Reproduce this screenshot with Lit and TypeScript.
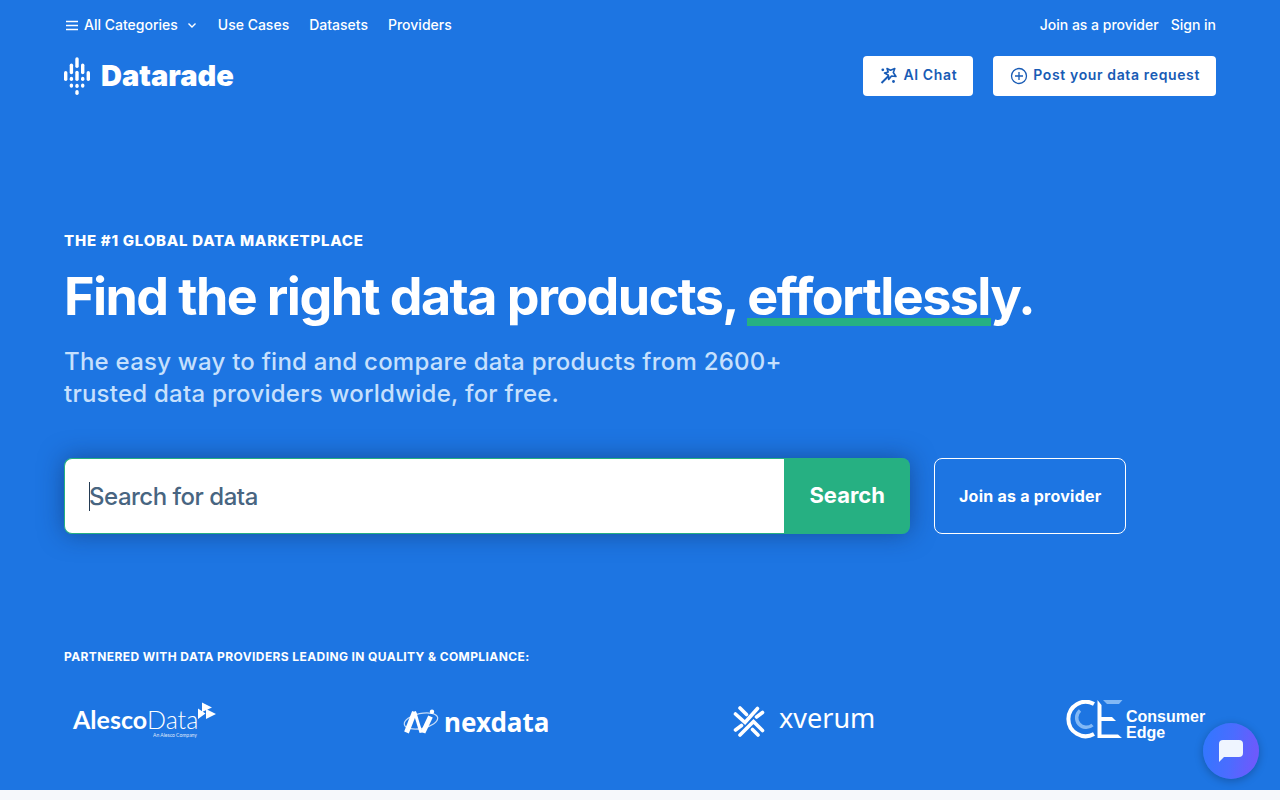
import { LitElement, html, svg, css } from "lit";
import { customElement } from "lit/decorators.js";

const markBars: [number, number, number][] = [
  [0, 14, 24],
  [5.7, 6.5, 17.3], [5.7, 19.7, 24], [5.7, 26.5, 30.7],
  [11.3, 0.3, 11], [11.3, 13.7, 24], [11.3, 26.7, 31], [11.3, 33, 38],
  [17, 6.5, 17.3], [17, 19.7, 24], [17, 26.5, 30.7],
  [22.6, 14, 24],
];

const alesco = svg`
  <g fill="#fff">
    <text x="9" y="29" font-size="25" font-family="Lato" font-weight="700">Alesco</text>
    <text x="83" y="29" font-size="25" font-family="Lato" font-weight="300">Data</text>
    <text x="89" y="37" font-size="5" font-family="Lato" opacity=".85">An Alesco Company</text>
    <path d="M138 2.500L148 7.500L138 12ZM134 8.500L141.500 13.500L134 19ZM142 9L152 14L142 19Z"/>
  </g>`;

const nexdata = svg`
  <g fill="none" stroke="#fff">
    <path d="M11.500 32.500L19.500 12" stroke-width="5"/>
    <path d="M19.500 11.500L26 32.500" stroke-width="3"/>
    <path d="M28 32.500L35.500 16.500" stroke-width="5"/>
    <path d="M25 31L29 31" stroke-width="3"/>
    <ellipse cx="26" cy="21" rx="17" ry="7.500" stroke-width="1.200" opacity=".75" transform="rotate(-12 26 21)"/>
  </g>
  <circle cx="37" cy="11.800" r="2.200" fill="#fff"/>
  <text x="49" y="32" fill="#fff" font-size="26" font-family="Noto Sans" font-weight="700">nexdata</text>`;

const xverum = svg`
  <g fill="none" stroke="#fff" stroke-width="3.600" stroke-linecap="round">
    <path d="M10.500 14L20 22.500L32.500 8.500M15 8L21.500 14.500M31.500 17L37.500 12.500"/>
    <path d="M15 35L28.500 21.500L37.500 30.500M10.500 30L16.500 25.500M27.500 29.500L33 35"/>
  </g>
  <text x="54" y="28" fill="#fff" font-size="27" font-family="Noto Sans">xverum</text>`;

const consumerEdge = svg`
  <g transform="translate(-2 0)">
    <g fill="none" stroke="#fff">
      <path d="M40 4A17.200 17.200 0 1 0 40 34" stroke-width="4"/>
      <path d="M26 10.500A9.500 9.500 0 1 0 38.500 25" stroke="#82b8f5" stroke-width="3.500"/>
    </g>
    <path d="M43.500 0L47.500 5V34.500H64L68 38H43.500Z M47.500 17H58L62 21H47.500Z" fill="#fff"/>
    <path d="M49 0H68.500L65 4H53Z" fill="#82b8f5"/>
    <g fill="#fff" font-family="Liberation Sans" font-weight="700" font-size="16">
      <text x="72" y="22">Consumer</text>
      <text x="72" y="38">Edge</text>
    </g>
  </g>`;

@customElement("app-root")
export class AppRoot extends LitElement {
  static styles = css`
    :host { display: block; min-height: 100vh; background: #f6f8fb; font-family: Inter, sans-serif; color: #fff; }
    *, *::before { box-sizing: border-box; }
    a { color: inherit; text-decoration: none; }
    svg { display: block; flex: none; }
    .hero { background: #1d75e2; padding: 0 64px 48px; }
    .topnav { display: flex; justify-content: space-between; padding-top: 14px; font-size: 14px; line-height: 22px; font-weight: 500; }
    .links { display: flex; gap: 20px; }
    .links.account { gap: 12px; }
    .cats { display: flex; align-items: center; gap: 4px; padding: 0; border: 0; background: none; color: inherit; font: inherit; }
    .chev { margin-left: 4px; }
    .brandbar { display: flex; justify-content: space-between; align-items: center; margin-top: 20px; }
    .brand { display: flex; align-items: center; gap: 11px; font-size: 29px; line-height: 40px; font-weight: 900; }
    .actions { display: flex; gap: 20px; }
    .action { display: flex; align-items: center; gap: 4px; height: 40px; padding: 0 16px 2px; border: 0; border-radius: 4px; background: #fff; color: #185bb5; font: 600 14px/20px Inter, sans-serif; letter-spacing: 0.045em; }
    .eyebrow { margin: 133px 0 0; font-size: 15px; line-height: 24px; font-weight: 800; letter-spacing: 0.05em; }
    h1 { margin: 12px 0 0; font-size: 52px; line-height: 64px; font-weight: 700; letter-spacing: -0.03em; }
    .marked { position: relative; z-index: 0; }
    .marked::before { content: ""; position: absolute; z-index: -1; left: 0; width: 85%; bottom: 2px; height: 8px; background: #26b082; }
    .lead { max-width: 768px; margin: 17px 0 0; font-size: 24px; line-height: 32px; font-weight: 500; letter-spacing: 0.01em; color: #c6e0fd; }
    .ctas { display: flex; gap: 24px; margin-top: 48px; }
    .search { display: flex; flex: 0 1 846px; height: 76px; border-radius: 8px; box-shadow: 0 0 24px rgba(16, 42, 90, 0.5); }
    .field { position: relative; flex: 1; min-width: 0; }
    .field::before { content: ""; position: absolute; left: 25px; top: 24px; width: 1px; height: 29px; background: #243b53; }
    input { width: 100%; height: 100%; padding: 0 24px; border: 1px solid #26b082; border-right: 0; border-radius: 8px 0 0 8px; outline: 0; background: #fff; font: 500 24px/32px Inter, sans-serif; letter-spacing: -0.02em; }
    input::placeholder { color: #486581; opacity: 1; }
    .go { padding: 0 25px 2px; border: 0; border-radius: 0 8px 8px 0; background: #26b082; color: #fff; font: 700 22px/32px Inter, sans-serif; }
    .join { display: flex; align-items: center; padding: 0 24px; border: 1px solid #fff; border-radius: 8px; font-size: 16px; font-weight: 700; letter-spacing: 0.015em; white-space: nowrap; }
    .partnered { margin: 114px 0 0; font-size: 12px; line-height: 18px; font-weight: 700; letter-spacing: 0.033em; }
    .logos { display: flex; justify-content: space-between; margin-top: 34px; }
    .chat { position: fixed; right: 21px; bottom: 21px; width: 56px; height: 56px; padding: 0; border: 0; border-radius: 50%; display: grid; place-items: center; background: linear-gradient(100deg, #2f78ff, #4b6cff 50%, #7655fb); box-shadow: 0 2px 8px rgba(0, 0, 0, 0.25); }
  `;

  render() {
    return html`
      <main class="hero">
        <nav class="topnav">
          <div class="links">
            <button class="cats">
              <svg width="16" height="16" viewBox="0 0 16 16" stroke="#fff" stroke-width="1.300"><path d="M2 4.500H14M2 8.500H14M2 12.500H14"/></svg>
              All Categories
              <svg class="chev" width="12" height="12" viewBox="0 0 12 12" fill="none" stroke="#fff" stroke-width="1.400"><path d="M2.500 4.500L6 8L9.500 4.500"/></svg>
            </button>
            <a href="#">Use Cases</a><a href="#">Datasets</a><a href="#">Providers</a>
          </div>
          <div class="links account"><a href="#">Join as a provider</a><a href="#">Sign in</a></div>
        </nav>
        <div class="brandbar">
          <a class="brand" href="#">
            <svg width="26" height="38" viewBox="0 0 26 38" fill="#fff">
              ${markBars.map(([x, y, end]) => svg`<rect x=${x} y=${y} width="3.400" height=${end - y} rx="1.700"/>`)}
            </svg>
            Datarade
          </a>
          <div class="actions">
            <button class="action">
              <svg width="20" height="20" viewBox="0 0 20 20" fill="none" stroke="#185bb5">
                <path d="M2.500 18L10 10.500" stroke-width="2"/>
                <path d="M8 3.500L11.500 5.300L15.800 3.500L14.300 7.500L17 11.500L12.500 11L9.700 14.500L9.200 10L5.500 8L9.200 7Z" stroke-width="1.600" stroke-linejoin="round"/>
                <g fill="#185bb5" stroke="none"><circle cx="3.800" cy="4.800" r="1.400"/><circle cx="14.500" cy="16.500" r="1.400"/></g>
              </svg>
              AI Chat
            </button>
            <button class="action">
              <svg width="20" height="20" viewBox="0 0 20 20" fill="none" stroke="#185bb5" stroke-width="1.300"><circle cx="10" cy="11" r="7.500"/><path d="M10 7V15M6 11H14"/></svg>
              Post your data request
            </button>
          </div>
        </div>
        <p class="eyebrow">THE #1 GLOBAL DATA MARKETPLACE</p>
        <h1>Find the right data products, <span class="marked">effortlessly.</span></h1>
        <p class="lead">The easy way to find and compare data products from 2600+ trusted data providers worldwide, for free.</p>
        <div class="ctas">
          <form class="search" @submit=${(e: Event) => e.preventDefault()}>
            <div class="field"><input type="text" aria-label="Search for data" placeholder="Search for data" /></div>
            <button class="go">Search</button>
          </form>
          <a class="join" href="#">Join as a provider</a>
        </div>
        <p class="partnered">PARTNERED WITH DATA PROVIDERS LEADING IN QUALITY &amp; COMPLIANCE:</p>
        <div class="logos">
          ${[alesco, nexdata, xverum, consumerEdge].map((logo) => html`<svg width="160" height="42" viewBox="0 0 160 42">${logo}</svg>`)}
        </div>
      </main>
      <button class="chat" aria-label="Open chat">
        <svg width="26" height="24" viewBox="0 0 26 24" fill="#eff5ff"><path d="M5 1H21A4 4 0 0 1 25 5V14A4 4 0 0 1 21 18H6L1 23V5A4 4 0 0 1 5 1Z"/></svg>
      </button>
    `;
  }
}
